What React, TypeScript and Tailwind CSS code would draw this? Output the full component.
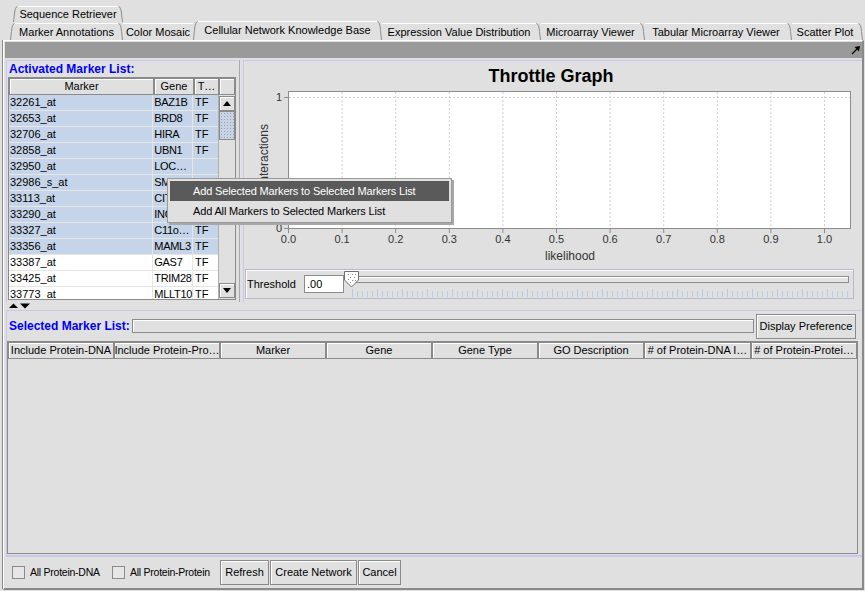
import React from "react";

type Row = { marker: string; gene: string; type: string; sel: boolean };

const ROWS: Row[] = [
  { marker: "32261_at", gene: "BAZ1B", type: "TF", sel: true },
  { marker: "32653_at", gene: "BRD8", type: "TF", sel: true },
  { marker: "32706_at", gene: "HIRA", type: "TF", sel: true },
  { marker: "32858_at", gene: "UBN1", type: "TF", sel: true },
  { marker: "32950_at", gene: "LOC…", type: "", sel: true },
  { marker: "32986_s_at", gene: "SMA…", type: "TF", sel: true },
  { marker: "33113_at", gene: "CIT…", type: "TF", sel: true },
  { marker: "33290_at", gene: "INO…", type: "TF", sel: true },
  { marker: "33327_at", gene: "C11o…", type: "TF", sel: true },
  { marker: "33356_at", gene: "MAML3", type: "TF", sel: true },
  { marker: "33387_at", gene: "GAS7", type: "TF", sel: false },
  { marker: "33425_at", gene: "TRIM28", type: "TF", sel: false },
  { marker: "33773_at", gene: "MLLT10", type: "TF", sel: false },
];

const COLUMNS = [
  "Include Protein-DNA",
  "Include Protein-Pro…",
  "Marker",
  "Gene",
  "Gene Type",
  "GO Description",
  "# of Protein-DNA I…",
  "# of Protein-Protei…",
];

const raised = "border border-[#8a8a8a] shadow-[inset_1px_1px_0_#ffffff]";

function Slant({ dir, h }: { dir: "l" | "r"; h: number }) {
  return (
    <svg width={5} height={h} className="block shrink-0">
      {dir === "r" ? (
        <path d={`M0.5 0.5 Q3 1 3.5 ${h / 2} L4.5 ${h}`} stroke="#8c8c8c" fill="none" />
      ) : (
        <path d={`M0.5 ${h} L1.5 ${h / 2} Q2 1 4.5 0.5`} stroke="#8c8c8c" fill="none" />
      )}
    </svg>
  );
}

function TabMid({ label, w, selected }: { label: string; w: number; selected?: boolean }) {
  return (
    <div
      className={
        "flex items-center justify-center border-t border-white whitespace-nowrap " +
        (selected ? "h-[19px] pb-[1px]" : "h-[17px]")
      }
      style={{ width: w }}
    >
      {label}
    </div>
  );
}

function Tabs() {
  return (
    <div className="h-[40px] flex flex-col">
      <div className="h-[22px] flex items-end pl-[13px]">
        <Slant dir="l" h={16} />
        <div className="h-[16px] w-[100px] flex items-center justify-center border-t border-white">Sequence Retriever</div>
        <Slant dir="r" h={16} />
      </div>
      <div className="h-[18px] flex items-end pl-[10px]">
        <Slant dir="l" h={17} />
        <TabMid label="Marker Annotations" w={103} />
        <Slant dir="r" h={17} />
        <TabMid label="Color Mosaic" w={70} />
        <Slant dir="l" h={19} />
        <TabMid label="Cellular Network Knowledge Base" w={179} selected />
        <Slant dir="r" h={19} />
        <TabMid label="Expression Value Distribution" w={154} />
        <Slant dir="r" h={17} />
        <TabMid label="Microarray Viewer" w={99} />
        <Slant dir="r" h={17} />
        <TabMid label="Tabular Microarray Viewer" w={142} />
        <Slant dir="r" h={17} />
        <TabMid label="Scatter Plot" w={66} />
        <Slant dir="r" h={17} />
      </div>
    </div>
  );
}

function ArrowButton({ up }: { up: boolean }) {
  return (
    <div className={"h-[15px] w-[16px] flex items-center justify-center bg-[#e0e0e0] " + raised}>
      <svg width={8} height={5}>
        <polygon points={up ? "0,5 4,0 8,5" : "0,0 8,0 4,5"} fill="#000" />
      </svg>
    </div>
  );
}

function MarkerTable() {
  return (
    <div className="w-[228px] h-[223px] border border-[#8a8a8a] bg-white flex flex-col overflow-hidden">
      <div className="h-[17px] flex shrink-0 bg-[#e0e0e0]">
        <div className={"w-[145px] flex items-center justify-center " + raised}>Marker</div>
        <div className={"w-[40px] flex items-center justify-center " + raised}>Gene</div>
        <div className={"w-[25px] flex items-center justify-center " + raised}>T…</div>
        <div className={"flex-1 " + raised} />
      </div>
      <div className="flex flex-1 min-h-0">
        <div className="w-[210px] flex flex-col overflow-hidden">
          {ROWS.map((r) => (
            <div
              key={r.marker}
              className={"h-[16px] shrink-0 flex border-b border-[#e6e6e6] " + (r.sel ? "bg-[#c5d4e8]" : "bg-white")}
            >
              <div className="w-[145px] pl-[1px] border-r border-[#e6e6e6] leading-[15px]">{r.marker}</div>
              <div className="w-[40px] pl-[1px] border-r border-[#e6e6e6] leading-[15px] whitespace-nowrap tracking-[-0.3px]">{r.gene}</div>
              <div className="w-[25px] pl-[2px] leading-[15px]">{r.type}</div>
            </div>
          ))}
        </div>
        <div className="flex-1 bg-[#e0e0e0] flex flex-col border-l border-[#b0b0b0]">
          <div className="pt-[1px]">
            <ArrowButton up />
          </div>
          <div className="h-[29px] w-[16px] border border-[#8a8a8a] bg-[#c8d4e4] bg-[radial-gradient(#8fa3bf_0.8px,transparent_0.9px)] bg-[length:3px_3px]" />
          <div className="flex-1" />
          <div className="pb-[1px]">
            <ArrowButton up={false} />
          </div>
        </div>
      </div>
    </div>
  );
}

function ThrottleChart() {
  const x0 = 44;
  const step = 53.6;
  const idx = Array.from({ length: 11 }, (_, i) => i);
  const font = "Liberation Sans, Arial, sans-serif";
  return (
    <svg width={614} height={208} className="block shrink-0" fontFamily={font}>
      <text x={307} y={21} textAnchor="middle" fontSize={18} fontWeight="bold" fill="#000">
        Throttle Graph
      </text>
      <rect x={44.5} y={30.5} width={562} height={137} fill="#fff" stroke="#8c8c8c" />
      {idx.slice(1).map((i) => (
        <line
          key={i}
          x1={x0 + i * step + 0.5}
          x2={x0 + i * step + 0.5}
          y1={31}
          y2={167}
          stroke="#cfcfcf"
          strokeDasharray="2 2"
        />
      ))}
      <line x1={45} x2={606} y1={36.5} y2={36.5} stroke="#cfcfcf" strokeDasharray="2 2" />
      <line x1={40} x2={44} y1={36.5} y2={36.5} stroke="#8c8c8c" />
      <line x1={40} x2={44} y1={167.5} y2={167.5} stroke="#8c8c8c" />
      <text x={38} y={40} textAnchor="end" fontSize={11} fill="#333">1</text>
      <text x={38} y={171} textAnchor="end" fontSize={11} fill="#333">0</text>
      {idx.map((i) => (
        <g key={i}>
          <line x1={x0 + i * step + 0.5} x2={x0 + i * step + 0.5} y1={168} y2={172} stroke="#8c8c8c" />
          <text x={x0 + i * step + 0.5} y={182} textAnchor="middle" fontSize={11} fill="#333">
            {(i / 10).toFixed(1)}
          </text>
        </g>
      ))}
      <text x={326} y={199} textAnchor="middle" fontSize={12} fill="#333">likelihood</text>
      <text
        x={0}
        y={0}
        transform="translate(24 94) rotate(-90)"
        textAnchor="middle"
        fontSize={12}
        fill="#333"
      >
        Interactions
      </text>
    </svg>
  );
}

function ThresholdSlider() {
  const ticks = Array.from({ length: 100 }, (_, i) => i);
  const dots: [number, number][] = [
    [4, 4], [8, 4], [11, 4], [6, 7], [10, 7], [4, 9], [8, 10], [11, 10], [6, 12],
  ];
  return (
    <svg width={508} height={28} className="block">
      <rect x={6.5} y={6.5} width={498} height={6} fill="#e4e4e4" stroke="#8c8c8c" />
      <line x1={7} x2={504} y1={7.5} y2={7.5} stroke="#ffffff" />
      {ticks.map((i) => (
        <line
          key={i}
          x1={8.5 + i * 5}
          x2={8.5 + i * 5}
          y1={i % 5 === 0 ? 19 : 21}
          y2={27}
          stroke="#b8cbe6"
        />
      ))}
      <polygon points="0.5,1.5 14.5,1.5 14.5,10 7.5,17 0.5,10" fill="#ffffff" stroke="#6e6e6e" />
      {dots.map(([x, y]) => (
        <rect key={`${x}-${y}`} x={x} y={y} width={1} height={1} fill="#7a8aa0" />
      ))}
    </svg>
  );
}

function ContextMenu() {
  return (
    <div className="absolute left-[167px] top-[178px] w-[285px] h-[45px] bg-[#e0e0e0] border border-[#9a9a9a] shadow-[2px_2px_0_#a8a8a8] p-[2px] tracking-[-0.15px]">
      <div className="h-[20px] bg-[#5a5a5a] text-white flex items-center pl-[23px]">
        Add Selected Markers to Selected Markers List
      </div>
      <div className="h-[20px] flex items-center pl-[23px]">Add All Markers to Selected Markers List</div>
    </div>
  );
}

function CheckBox({ label, w }: { label: string; w: number }) {
  return (
    <div className="flex items-center gap-[5px]" style={{ width: w }}>
      <div className="w-[13px] h-[13px] shrink-0 border border-[#8a8a8a] bg-[#e6e6e6]" />
      <span className="text-[10.5px] tracking-[-0.25px] whitespace-nowrap">{label}</span>
    </div>
  );
}

export default function App() {
  return (
    <div className="relative w-[865px] h-[591px] overflow-hidden bg-[#e0e0e0] text-black text-[11px] leading-none [font-family:'Liberation_Sans',Arial,sans-serif]">
      <Tabs />
      <div className="ml-[2px] w-[861px] h-[549px] border-l border-[#8a8a8a]">
        <div className="h-[547px] w-[858px] border-l border-t border-white border-r-2 border-b-2 border-r-[#8a8a8a] border-b-[#8a8a8a] flex flex-col box-content">
          <div className="mt-[1px] ml-[1px] h-[16px] bg-[#9a9a9a] flex items-center justify-end pr-[1px] shrink-0">
            <svg width={10} height={10}>
              <line x1={1} y1={9} x2={7} y2={3} stroke="#000" strokeWidth={1.2} />
              <polygon points="9,1 3.5,2 8,6.5" fill="#000" />
            </svg>
          </div>
          <div className="mt-[2px] h-[242px] flex shrink-0">
            <div className="ml-[2px] w-[232px] border-l border-t border-[#c8c8ec] pl-[1px] flex flex-col">
              <div className="h-[16px] flex items-center pl-[1px] text-[12px] font-bold text-[#0000f0]">
                Activated Marker List:
              </div>
              <MarkerTable />
            </div>
            <div className="w-[5px] flex">
              <div className="ml-[1px] w-[1px] bg-[#a8a8a8]" />
            </div>
            <div className="flex-1 border-l border-t border-[#c8c8ec] flex flex-col">
              <ThrottleChart />
              <div className="ml-[1px] w-[609px] h-[30px] border border-[#b8b8d0] shadow-[inset_1px_1px_0_#ffffff] flex items-center">
                <span className="ml-[1px] w-[57px]">Threshold</span>
                <div className="w-[40px] h-[18px] bg-white border border-[#8a8a8a] flex items-center pl-[2px]">.00</div>
                <ThresholdSlider />
              </div>
            </div>
          </div>
          <div className="h-[8px] shrink-0 flex items-start pl-[5px] pt-[1px]">
            <svg width={22} height={6}>
              <polygon points="0,5 4.5,0.5 9,5" fill="#000" />
              <polygon points="11,0.5 21,0.5 16,5.5" fill="#000" />
            </svg>
          </div>
          <div className="ml-[2px] h-[247px] shrink-0 border-l border-t border-b-2 border-[#c8c8ec] flex flex-col">
            <div className="h-[30px] flex items-center shrink-0">
              <span className="w-[125px] pl-[2px] text-[12px] font-bold text-[#0000f0]">Selected Marker List:</span>
              <div className="w-[622px] h-[14px] border border-[#8a8a8a] bg-[#e0e0e0] shadow-[inset_1px_1px_0_#ffffff]" />
              <button className={"ml-[2px] w-[100px] h-[25px] bg-[#e0e0e0] " + raised}>Display Preference</button>
            </div>
            <div className="flex-1 w-[851px] border border-[#8a8a8a] flex flex-col mb-[1px]">
              <div className="h-[17px] flex shrink-0">
                {COLUMNS.map((c, i) => (
                  <div
                    key={c}
                    className={"flex items-center justify-center whitespace-nowrap overflow-hidden " + raised}
                    style={{ width: i === 6 ? 107 : 106 }}
                  >
                    {c}
                  </div>
                ))}
              </div>
              <div className="flex-1" />
            </div>
          </div>
          <div className="flex-1 flex items-center pl-[8px]">
            <CheckBox label="All Protein-DNA" w={100} />
            <CheckBox label="All Protein-Protein" w={108} />
            <button className={"w-[49px] h-[25px] bg-[#e0e0e0] " + raised}>Refresh</button>
            <button className={"ml-[1px] w-[87px] h-[25px] bg-[#e0e0e0] " + raised}>Create Network</button>
            <button className={"ml-[1px] w-[43px] h-[25px] bg-[#e0e0e0] " + raised}>Cancel</button>
          </div>
        </div>
      </div>
      <ContextMenu />
    </div>
  );
}
